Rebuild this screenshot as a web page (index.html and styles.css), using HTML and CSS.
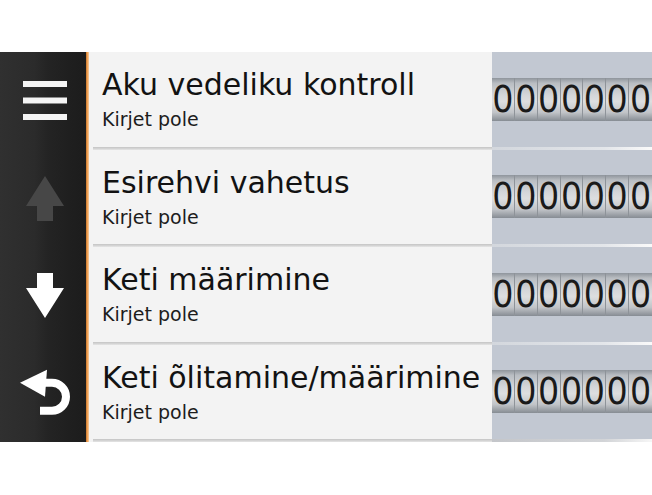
FILE: index.html
```html
<!DOCTYPE html>
<html lang="et">
<head>
	<meta charset="UTF-8">
	<title>Hooldus</title>
	<link rel="stylesheet" href="styles.css">
</head>
<body>
	<div class="screen">
		<div class="side">
			<div class="btn">
				<svg width="48" height="48" viewBox="0 0 48 48">
					<rect x="2" y="4" width="44" height="6" fill="#f4f4f4"/>
					<rect x="2" y="20.5" width="44" height="6" fill="#f4f4f4"/>
					<rect x="2" y="37" width="44" height="6" fill="#f4f4f4"/>
				</svg>
			</div>
			<div class="btn">
				<svg width="48" height="48" viewBox="0 0 48 48">
					<polygon points="24,2 43,32 32,32 32,47 16,47 16,32 5,32" fill="#474747"/>
				</svg>
			</div>
			<div class="btn">
				<svg width="48" height="48" viewBox="0 0 48 48">
					<polygon points="16,1 32,1 32,16 43,16 24,46 5,16 16,16" fill="#fff"/>
				</svg>
			</div>
			<div class="btn">
				<svg width="56" height="56" viewBox="0 0 56 56">
					<polygon points="3,17.75 30,4.75 28,31.75" fill="#fff"/>
					<path d="M25 17.75 H35 A14 14 0 0 1 35 45.75 H23" fill="none" stroke="#fff" stroke-width="8"/>
				</svg>
			</div>
		</div>
		<div class="accent"></div>
		<div class="list">
			<div class="row">
				<div class="info">
					<div class="title">Aku vedeliku kontroll</div>
					<div class="sub">Kirjet pole</div>
				</div>
				<div class="meter">
					<div class="odo"><span>0</span><span>0</span><span>0</span><span>0</span><span>0</span><span>0</span><span>0</span></div>
				</div>
			</div>
			<div class="row">
				<div class="info">
					<div class="title">Esirehvi vahetus</div>
					<div class="sub">Kirjet pole</div>
				</div>
				<div class="meter">
					<div class="odo"><span>0</span><span>0</span><span>0</span><span>0</span><span>0</span><span>0</span><span>0</span></div>
				</div>
			</div>
			<div class="row">
				<div class="info">
					<div class="title">Keti määrimine</div>
					<div class="sub">Kirjet pole</div>
				</div>
				<div class="meter">
					<div class="odo"><span>0</span><span>0</span><span>0</span><span>0</span><span>0</span><span>0</span><span>0</span></div>
				</div>
			</div>
			<div class="row">
				<div class="info">
					<div class="title">Keti õlitamine/määrimine</div>
					<div class="sub">Kirjet pole</div>
				</div>
				<div class="meter">
					<div class="odo"><span>0</span><span>0</span><span>0</span><span>0</span><span>0</span><span>0</span><span>0</span></div>
				</div>
			</div>
		</div>
	</div>
</body>
</html>
```

FILE: styles.css
```css
*{
	margin: 0;
	padding: 0;
	box-sizing: border-box;
}
body{
	background: #fff;
	font-family: "DejaVu Sans", "Liberation Sans", sans-serif;
}
.screen{
	display: flex;
	width: 652px;
	height: 390px;
	margin-top: 52px;
}

/* left button column */
.side{
	width: 86px;
	display: grid;
	grid-template-rows: repeat(4, 1fr);
	background: linear-gradient(to right, #303030 0%, #2b2b2b 40%, #242424 55%, #1f1f1f 80%, #1c1c1c 100%);
}
.btn{
	display: flex;
	align-items: center;
	justify-content: center;
	padding-left: 4px;
}
.btn svg{
	display: block;
}
.accent{
	width: 3px;
	background: linear-gradient(to right, #c9772c, #f0a257, #f6cfa6);
}

/* rows */
.list{
	flex: 1;
	display: grid;
	grid-template-rows: repeat(4, 1fr);
}
.row{
	display: flex;
}
.info{
	flex: 1;
	padding: 16px 0 0 13px;
	background:
		linear-gradient(#c4c4c4, #d6d6d6 60%, #e6e6e6) no-repeat 4px 100% / calc(100% - 4px) 3px,
		#f3f3f3;
	overflow: hidden;
	white-space: nowrap;
}
.title{
	font-size: 30px;
	line-height: 34px;
	color: #121212;
}
.sub{
	font-size: 19px;
	line-height: 24px;
	margin-top: 5px;
	color: #1c1c1c;
}

/* odometer pane */
.meter{
	width: 160px;
	display: flex;
	align-items: center;
	padding-bottom: 3px;
	background:
		linear-gradient(to right, #d3d7dd, #e3e6ea 70%, #fafafa) no-repeat 0 100% / 100% 3px,
		#c2c8d2;
}
.row:last-child .meter{
	background:
		linear-gradient(to right, #c4c6ca, #d2d4d7 70%, #f6f6f6) no-repeat 0 100% / 100% 3px,
		#c2c8d2;
}
.odo{
	display: grid;
	grid-template-columns: repeat(7, minmax(0, 1fr));
	width: 100%;
	height: 43px;
	background: linear-gradient(#8f959c 0%, #b9bdc2 12%, #d4d6d9 40%, #dddedf 55%, #c1c4c8 80%, #868c93 100%);
}
.odo span{
	display: flex;
	align-items: center;
	justify-content: center;
	min-width: 0;
	font-family: "DejaVu Sans Condensed", "DejaVu Sans", sans-serif;
	font-size: 37px;
	color: #1a1a1a;
	border-right: 1px solid #8e9399;
}
.odo span:last-child{
	border-right: none;
}
```
